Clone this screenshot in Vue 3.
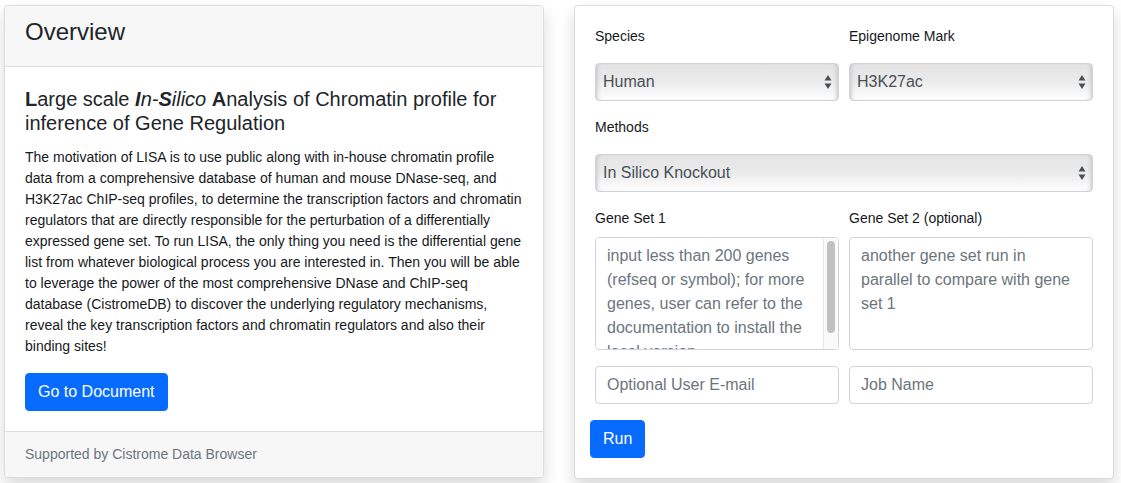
<script setup>
import { ref } from 'vue'

const species = ref('Human')
const mark = ref('H3K27ac')
const method = ref('In Silico Knockout')
const geneSet1 = ref('')
const geneSet2 = ref('')
const email = ref('')
const jobName = ref('')

// Scroll position of the first gene box, as a percentage of the track
const thumbTop = ref(0)
function onScroll(event) {
  const box = event.target
  thumbTop.value = (box.scrollTop / box.scrollHeight) * 100
}
</script>

<template>
  <main class="page">
    <section class="card">
      <header class="card-header">
        <h4>Overview</h4>
      </header>
      <div class="card-body">
        <h5><b>L</b>arge scale <i><b>I</b>n-<b>S</b>ilico</i> <b>A</b>nalysis of Chromatin profile for inference of Gene Regulation</h5>
        <p>The motivation of LISA is to use public along with in-house chromatin profile data from a comprehensive database of human and mouse DNase-seq, and H3K27ac ChIP-seq profiles, to determine the transcription factors and chromatin regulators that are directly responsible for the perturbation of a differentially expressed gene set. To run LISA, the only thing you need is the differential gene list from whatever biological process you are interested in. Then you will be able to leverage the power of the most comprehensive DNase and ChIP-seq database (CistromeDB) to discover the underlying regulatory mechanisms, reveal the key transcription factors and chromatin regulators and also their binding sites!</p>
        <a class="btn" href="#document">Go to Document</a>
      </div>
      <footer class="card-footer">Supported by Cistrome Data Browser</footer>
    </section>

    <section class="card">
      <form class="form" @submit.prevent>
        <div class="fields">
          <div class="field pick">
            <label for="species">Species</label>
            <select id="species" v-model="species">
              <option>Human</option>
              <option>Mouse</option>
            </select>
          </div>
          <div class="field pick">
            <label for="mark">Epigenome Mark</label>
            <select id="mark" v-model="mark">
              <option>H3K27ac</option>
              <option>DNase</option>
            </select>
          </div>
          <div class="field pick wide">
            <label for="method">Methods</label>
            <select id="method" v-model="method">
              <option>In Silico Knockout</option>
            </select>
          </div>
          <div class="field">
            <label for="set1">Gene Set 1</label>
            <div class="scroll-box">
              <textarea id="set1" v-model="geneSet1" class="control scrolls" placeholder="input less than 200 genes (refseq or symbol); for more genes, user can refer to the documentation to install the local version" @scroll="onScroll"></textarea>
              <div class="track" aria-hidden="true">
                <div class="rail">
                  <div class="thumb" :style="{ top: thumbTop + '%' }"></div>
                </div>
              </div>
            </div>
          </div>
          <div class="field">
            <label for="set2">Gene Set 2 (optional)</label>
            <textarea id="set2" v-model="geneSet2" class="control" placeholder="another gene set run in parallel to compare with gene set 1"></textarea>
          </div>
          <input v-model="email" class="control line" type="email" aria-label="Optional User E-mail" placeholder="Optional User E-mail">
          <input v-model="jobName" class="control line" type="text" aria-label="Job Name" placeholder="Job Name">
        </div>
        <button class="btn" type="submit">Run</button>
      </form>
    </section>
  </main>
</template>

<style>
body {
  background: #fff;
}
</style>

<style scoped>
* {
  box-sizing: border-box;
}

.page {
  display: grid;
  grid-template-columns: 1fr 1fr;
  gap: 30px;
  align-items: start;
  padding: 5px 7px 4px 4px;
  font-family: "Liberation Sans", Arial, sans-serif;
  font-size: 14px;
  line-height: 21px;
  color: #16191c;
}

.card {
  min-width: 0;
  background: #fff;
  border: 1px solid #dcdcdc;
  border-radius: 4px;
  box-shadow: 0 8px 16px rgba(0, 0, 0, 0.15);
}

.card-header {
  padding: 12px 20px 20px;
  background: #f7f7f7;
  border-bottom: 1px solid #dcdcdc;
  border-radius: 3px 3px 0 0;
}

h4,
h5,
p {
  margin: 0;
}

h4 {
  font-size: 24px;
  line-height: 28px;
  font-weight: 400;
  color: #212529;
}

.card-body {
  padding: 20px;
}

h5 {
  margin-bottom: 12px;
  font-size: 20px;
  line-height: 24px;
  font-weight: 400;
  color: #212529;
}

p {
  margin-bottom: 16px;
}

.card-footer {
  padding: 12px 20px;
  background: #f7f7f7;
  border-top: 1px solid #dcdcdc;
  border-radius: 0 0 3px 3px;
  color: #6c757d;
}

.btn {
  display: inline-block;
  vertical-align: top;
  padding: 6px 12px;
  border: 1px solid #086bff;
  border-radius: 4px;
  background: #086bff;
  color: #fff;
  font: 16px/24px "Liberation Sans", Arial, sans-serif;
  text-decoration: none;
  cursor: pointer;
}

.form {
  padding: 20px 15px;
}

.fields {
  display: grid;
  grid-template-columns: 1fr 1fr;
  gap: 16px 10px;
  padding: 0 5px;
  margin-bottom: 16px;
}

.field {
  display: flex;
  flex-direction: column;
  gap: 8px;
}

.pick {
  gap: 16px;
}

.wide {
  grid-column: 1 / -1;
}

select {
  width: 100%;
  height: 38px;
  padding: 6px 24px 6px 7px;
  border: 1px solid #ced4da;
  border-radius: 4px;
  appearance: none;
  background-color: #f0f0f0;
  background-image:
    url("data:image/svg+xml,%3Csvg xmlns='http://www.w3.org/2000/svg' viewBox='0 0 8 14'%3E%3Cpath fill='%23495057' d='M4 0 7.5 5.5H.5zM4 14 .5 8.5h7z'/%3E%3C/svg%3E"),
    linear-gradient(#e4e4e4, #ebebeb 50%, #fff);
  background-repeat: no-repeat;
  background-position: right 6px center, 0 0;
  background-size: 8px 14px, 100% 100%;
  box-shadow: inset 4px 0 4px -3px #c4c4c4, inset -4px 0 4px -3px #c4c4c4;
  color: #495057;
  font: 16px/24px "Liberation Sans", Arial, sans-serif;
}

.control {
  display: block;
  width: 100%;
  min-width: 0;
  padding: 6px 11px;
  border: 1px solid #ced4da;
  border-radius: 4px;
  background: #fff;
  color: #495057;
  font: 16px/24px "Liberation Sans", Arial, sans-serif;
}

.line {
  height: 38px;
}

textarea {
  height: 113px;
  resize: none;
}

.control::placeholder {
  color: #6c757d;
  opacity: 1;
}

.scroll-box {
  position: relative;
}

.scrolls {
  padding-right: 26px;
  scrollbar-width: none;
}

.track {
  position: absolute;
  top: 1px;
  right: 1px;
  bottom: 1px;
  width: 15px;
  padding: 3px;
  background: #fafafa;
  border-left: 1px solid #e8e8e8;
  border-radius: 0 3px 3px 0;
  pointer-events: none;
}

.rail {
  position: relative;
  height: 100%;
}

.thumb {
  position: absolute;
  left: 0;
  right: 0;
  height: 88%;
  margin: 0 1px 0 0;
  border-radius: 4px;
  background: #c1c1c1;
}

.rail .thumb {
  margin: 0;
}
</style>
